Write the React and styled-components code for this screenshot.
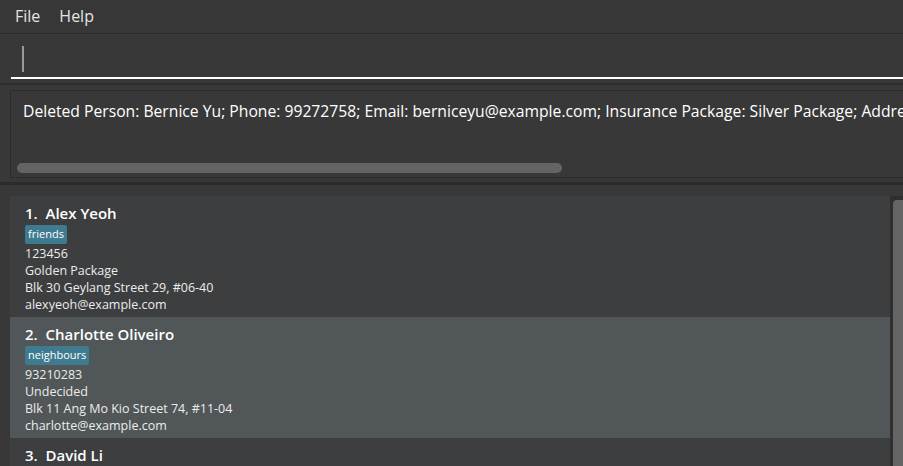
import React from 'react'
import styled, {createGlobalStyle} from 'styled-components'

const GlobalStyle = createGlobalStyle`
  html, body {
    margin: 0;
    padding: 0;
    background: #383838;
    overflow: hidden;
  }
  * { box-sizing: border-box; }
`

const persons = [
  {
    name: 'Alex Yeoh',
    tag: 'friends',
    phone: '123456',
    pkg: 'Golden Package',
    address: 'Blk 30 Geylang Street 29, #06-40',
    email: 'alexyeoh@example.com',
  },
  {
    name: 'Charlotte Oliveiro',
    tag: 'neighbours',
    phone: '93210283',
    pkg: 'Undecided',
    address: 'Blk 11 Ang Mo Kio Street 74, #11-04',
    email: 'charlotte@example.com',
  },
  {
    name: 'David Li',
    tag: 'family',
    phone: '91031282',
    pkg: 'Silver Package',
    address: 'Blk 436 Serangoon Gardens Street 26, #16-43',
    email: 'lidavid@example.com',
  },
]

const App = () => {
  return (
    <Window>
      <GlobalStyle />
      <MenuBar>
        <MenuItem>File</MenuItem>
        <MenuItem>Help</MenuItem>
      </MenuBar>

      <CommandPane>
        <CommandField>
          <Caret />
        </CommandField>
      </CommandPane>

      <ResultPane>
        <ResultBox>
          <ResultText>
            Deleted Person: Bernice Yu; Phone: 99272758; Email: berniceyu@example.com; Insurance Package: Silver Package; Address: Blk 47 Tampines Street 20, #17-35; Tags: [colleagues][friends]
          </ResultText>
          <HScroll>
            <HThumb />
          </HScroll>
        </ResultBox>
      </ResultPane>

      <ListPane>
        <List>
          {persons.map((p, i) => (
            <Card key={p.name} odd={i % 2 === 1}>
              <Name>{i + 1}.&nbsp; {p.name}</Name>
              <Tags>
                <Tag>{p.tag}</Tag>
              </Tags>
              <Detail>{p.phone}</Detail>
              <Detail>{p.pkg}</Detail>
              <Detail>{p.address}</Detail>
              <Detail>{p.email}</Detail>
            </Card>
          ))}
        </List>
        <VScroll>
          <VThumb />
        </VScroll>
      </ListPane>
    </Window>
  )
}

export default App

const Window = styled.div`
  width: 903px;
  height: 466px;
  display: flex;
  flex-direction: column;
  background: #383838;
  font-family: "Segoe UI", "Open Sans", sans-serif;
  color: #ffffff;
  overflow: hidden;
`

const MenuBar = styled.div`
  height: 34px;
  display: flex;
  align-items: center;
  gap: 19px;
  padding: 0 0 1px 15px;
  background: #373737;
  border-bottom: 1px solid #2b2b2b;
`

const MenuItem = styled.div`
  font-size: 16px;
  color: #e3e3e3;
`

const CommandPane = styled.div`
  height: 51px;
  padding: 12px 0 0 11px;
  border-bottom: 2px solid #2c2c2c;
`

const CommandField = styled.div`
  height: 33px;
  border-bottom: 2px solid #ffffff;
  padding: 0 0 0 11px;
  display: flex;
  align-items: flex-start;
`

const Caret = styled.div`
  width: 2px;
  height: 26px;
  background: #9a9a9a;
`

const ResultPane = styled.div`
  height: 100px;
  padding: 5px 0 5px 10px;
  border-bottom: 3px solid #2b2b2b;
`

const ResultBox = styled.div`
  height: 88px;
  border: 1px solid #2b2b2b;
  border-right: none;
  padding: 9px 0 4px 12px;
  display: flex;
  flex-direction: column;
  justify-content: space-between;
  overflow: hidden;
`

const ResultText = styled.div`
  font-size: 15.7px;
  white-space: nowrap;
  color: #ffffff;
`

const HScroll = styled.div`
  margin-left: -6px;
  height: 10px;
`

const HThumb = styled.div`
  width: 545px;
  height: 10px;
  border-radius: 5px;
  background: #646464;
`

const ListPane = styled.div`
  flex: 1;
  display: flex;
  padding: 11px 0 0 10px;
  min-height: 0;
`

const List = styled.div`
  flex: 1;
  display: flex;
  flex-direction: column;
  overflow: hidden;
`

const Card = styled.div`
  flex-shrink: 0;
  height: 121px;
  padding: 6px 0 0 15px;
  background: ${p => (p.odd ? '#515658' : '#3c3e3f')};
`

const Name = styled.div`
  font-size: 15px;
  font-weight: 600;
  color: #ffffff;
  line-height: 22px;
`

const Tags = styled.div`
  display: flex;
  gap: 5px;
  margin: 1px 0 1px;
`

const Tag = styled.span`
  background: #3e7b91;
  color: #ffffff;
  font-size: 11px;
  padding: 2px 3px 3px;
  border-radius: 2px;
  line-height: 14px;
`

const Detail = styled.div`
  font-size: 12.5px;
  line-height: 17px;
  color: #ececec;
`

const VScroll = styled.div`
  width: 13px;
  background: #2f2f2f;
  padding: 4px 0 0 3px;
`

const VThumb = styled.div`
  width: 10px;
  height: 400px;
  border-radius: 4px 0 0 0;
  background: #646464;
`
